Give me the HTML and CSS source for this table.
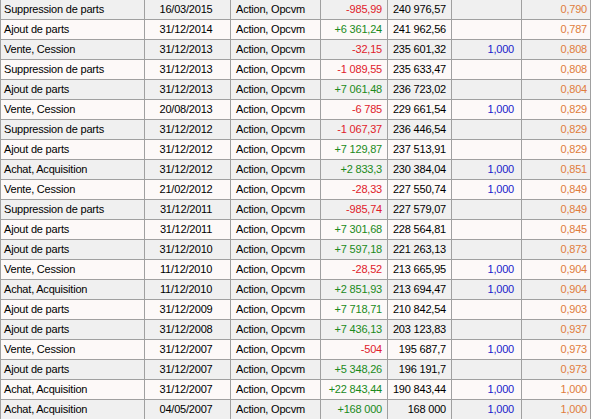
FILE: index.html
```html
<!DOCTYPE html>
<html>
<head>
<meta charset="utf-8">
<link rel="stylesheet" href="styles.css">
</head>
<body>
<div class="grid">
  <div class="row odd"><div class="c t">Suppression de parts</div><div class="c d">16/03/2015</div><div class="c k">Action, Opcvm</div><div class="c n neg">-985,99</div><div class="c n">240 976,57</div><div class="c n q"></div><div class="c n o">0,790</div></div>
  <div class="row"><div class="c t">Ajout de parts</div><div class="c d">31/12/2014</div><div class="c k">Action, Opcvm</div><div class="c n pos">+6 361,24</div><div class="c n">241 962,56</div><div class="c n q"></div><div class="c n o">0,787</div></div>
  <div class="row odd"><div class="c t">Vente, Cession</div><div class="c d">31/12/2013</div><div class="c k">Action, Opcvm</div><div class="c n neg">-32,15</div><div class="c n">235 601,32</div><div class="c n q">1,000</div><div class="c n o">0,808</div></div>
  <div class="row"><div class="c t">Suppression de parts</div><div class="c d">31/12/2013</div><div class="c k">Action, Opcvm</div><div class="c n neg">-1 089,55</div><div class="c n">235 633,47</div><div class="c n q"></div><div class="c n o">0,808</div></div>
  <div class="row odd"><div class="c t">Ajout de parts</div><div class="c d">31/12/2013</div><div class="c k">Action, Opcvm</div><div class="c n pos">+7 061,48</div><div class="c n">236 723,02</div><div class="c n q"></div><div class="c n o">0,804</div></div>
  <div class="row"><div class="c t">Vente, Cession</div><div class="c d">20/08/2013</div><div class="c k">Action, Opcvm</div><div class="c n neg">-6 785</div><div class="c n">229 661,54</div><div class="c n q">1,000</div><div class="c n o">0,829</div></div>
  <div class="row odd"><div class="c t">Suppression de parts</div><div class="c d">31/12/2012</div><div class="c k">Action, Opcvm</div><div class="c n neg">-1 067,37</div><div class="c n">236 446,54</div><div class="c n q"></div><div class="c n o">0,829</div></div>
  <div class="row"><div class="c t">Ajout de parts</div><div class="c d">31/12/2012</div><div class="c k">Action, Opcvm</div><div class="c n pos">+7 129,87</div><div class="c n">237 513,91</div><div class="c n q"></div><div class="c n o">0,829</div></div>
  <div class="row odd"><div class="c t">Achat, Acquisition</div><div class="c d">31/12/2012</div><div class="c k">Action, Opcvm</div><div class="c n pos">+2 833,3</div><div class="c n">230 384,04</div><div class="c n q">1,000</div><div class="c n o">0,851</div></div>
  <div class="row"><div class="c t">Vente, Cession</div><div class="c d">21/02/2012</div><div class="c k">Action, Opcvm</div><div class="c n neg">-28,33</div><div class="c n">227 550,74</div><div class="c n q">1,000</div><div class="c n o">0,849</div></div>
  <div class="row odd"><div class="c t">Suppression de parts</div><div class="c d">31/12/2011</div><div class="c k">Action, Opcvm</div><div class="c n neg">-985,74</div><div class="c n">227 579,07</div><div class="c n q"></div><div class="c n o">0,849</div></div>
  <div class="row"><div class="c t">Ajout de parts</div><div class="c d">31/12/2011</div><div class="c k">Action, Opcvm</div><div class="c n pos">+7 301,68</div><div class="c n">228 564,81</div><div class="c n q"></div><div class="c n o">0,845</div></div>
  <div class="row odd"><div class="c t">Ajout de parts</div><div class="c d">31/12/2010</div><div class="c k">Action, Opcvm</div><div class="c n pos">+7 597,18</div><div class="c n">221 263,13</div><div class="c n q"></div><div class="c n o">0,873</div></div>
  <div class="row"><div class="c t">Vente, Cession</div><div class="c d">11/12/2010</div><div class="c k">Action, Opcvm</div><div class="c n neg">-28,52</div><div class="c n">213 665,95</div><div class="c n q">1,000</div><div class="c n o">0,904</div></div>
  <div class="row odd"><div class="c t">Achat, Acquisition</div><div class="c d">11/12/2010</div><div class="c k">Action, Opcvm</div><div class="c n pos">+2 851,93</div><div class="c n">213 694,47</div><div class="c n q">1,000</div><div class="c n o">0,904</div></div>
  <div class="row"><div class="c t">Ajout de parts</div><div class="c d">31/12/2009</div><div class="c k">Action, Opcvm</div><div class="c n pos">+7 718,71</div><div class="c n">210 842,54</div><div class="c n q"></div><div class="c n o">0,903</div></div>
  <div class="row odd"><div class="c t">Ajout de parts</div><div class="c d">31/12/2008</div><div class="c k">Action, Opcvm</div><div class="c n pos">+7 436,13</div><div class="c n">203 123,83</div><div class="c n q"></div><div class="c n o">0,937</div></div>
  <div class="row"><div class="c t">Vente, Cession</div><div class="c d">31/12/2007</div><div class="c k">Action, Opcvm</div><div class="c n neg">-504</div><div class="c n">195 687,7</div><div class="c n q">1,000</div><div class="c n o">0,973</div></div>
  <div class="row odd"><div class="c t">Ajout de parts</div><div class="c d">31/12/2007</div><div class="c k">Action, Opcvm</div><div class="c n pos">+5 348,26</div><div class="c n">196 191,7</div><div class="c n q"></div><div class="c n o">0,973</div></div>
  <div class="row"><div class="c t">Achat, Acquisition</div><div class="c d">31/12/2007</div><div class="c k">Action, Opcvm</div><div class="c n pos">+22 843,44</div><div class="c n">190 843,44</div><div class="c n q">1,000</div><div class="c n o">1,000</div></div>
  <div class="row odd"><div class="c t">Achat, Acquisition</div><div class="c d">04/05/2007</div><div class="c k">Action, Opcvm</div><div class="c n pos">+168 000</div><div class="c n">168 000</div><div class="c n q">1,000</div><div class="c n o">1,000</div></div>
</div>
</body>
</html>
```
FILE: styles.css
```css
html, body {
  margin: 0;
  padding: 0;
  background: #ffffff;
  overflow: hidden;
}
body {
  font-family: "Liberation Sans", Arial, sans-serif;
  font-size: 11px;
  letter-spacing: -0.2px;
  color: #000000;
}
.grid {
  display: grid;
  grid-template-columns: 144px 86px 90px 67px 64px 70px 69px;
  grid-auto-rows: 20px;
  border-left: 1px solid #a0a0a0;
  width: 590px;
}
.row {
  display: contents;
}
.c {
  box-sizing: border-box;
  border-right: 1px solid #a0a0a0;
  border-bottom: 1px solid #a0a0a0;
  line-height: 19px;
  white-space: nowrap;
  overflow: hidden;
  background: #fdf9f8;
}
.row.odd .c {
  background: #f0f0f0;
}
.t {
  padding-left: 3px;
}
.d {
  text-align: center;
  padding-right: 3px;
}
.k {
  padding-left: 5px;
}
.n {
  text-align: right;
  padding-right: 5px;
}
.neg {
  color: #e0202a;
}
.pos {
  color: #1a8a1a;
}
.q {
  color: #1a1acc;
  padding-right: 7px;
}
.o {
  color: #e07c3c;
  padding-right: 3px;
}
```
